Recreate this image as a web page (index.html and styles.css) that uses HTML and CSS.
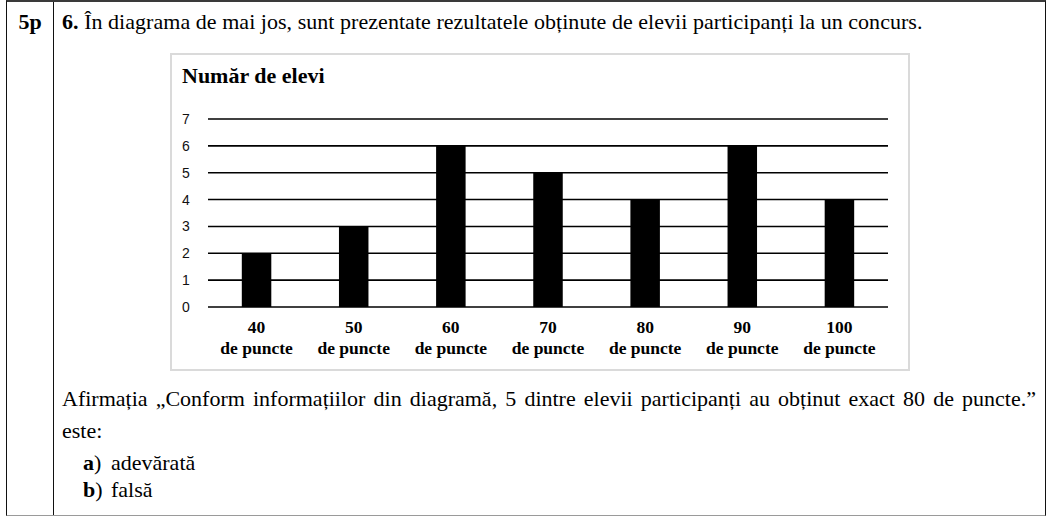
FILE: index.html
```html
<!DOCTYPE html>
<html lang="ro">
<head>
<meta charset="utf-8">
<title>Diagrama</title>
<link rel="stylesheet" href="styles.css">
</head>
<body>
<div class="sheet">
  <div class="score">5p</div>
  <div class="content">
    <p class="q"><b>6.</b> În diagrama de mai jos, sunt prezentate rezultatele obținute de elevii participanți la un concurs.</p>
    <div class="chart">
      <div class="chart-title">Număr de elevi</div>
      <svg class="plot" width="736" height="212" viewBox="0 0 736 212">
        <g font-family="Liberation Sans, Arial, sans-serif" font-size="14" text-anchor="middle" fill="#111">
          <text x="14" y="19">7</text>
          <text x="14" y="45.9">6</text>
          <text x="14" y="72.7">5</text>
          <text x="14" y="99.6">4</text>
          <text x="14" y="126.4">3</text>
          <text x="14" y="153.3">2</text>
          <text x="14" y="180.1">1</text>
          <text x="14" y="207">0</text>
        </g>
        <g stroke="#000" stroke-width="1.6">
          <line x1="36" x2="716" y1="14" y2="14"/>
          <line x1="36" x2="716" y1="40.86" y2="40.86"/>
          <line x1="36" x2="716" y1="67.71" y2="67.71"/>
          <line x1="36" x2="716" y1="94.57" y2="94.57"/>
          <line x1="36" x2="716" y1="121.43" y2="121.43"/>
          <line x1="36" x2="716" y1="148.29" y2="148.29"/>
          <line x1="36" x2="716" y1="175.14" y2="175.14"/>
          <line x1="36" x2="716" y1="202" y2="202"/>
        </g>
        <g fill="#000">
          <rect x="69.8" y="148.29" width="29.5" height="53.71"/>
          <rect x="166.96" y="121.43" width="29.5" height="80.57"/>
          <rect x="264.1" y="40.86" width="29.5" height="161.14"/>
          <rect x="361.25" y="67.71" width="29.5" height="134.29"/>
          <rect x="458.4" y="94.57" width="29.5" height="107.43"/>
          <rect x="555.54" y="40.86" width="29.5" height="161.14"/>
          <rect x="652.68" y="94.57" width="29.5" height="107.43"/>
        </g>
      </svg>
      <div class="xlabels">
        <div class="xl"><span>40</span><span>de puncte</span></div>
        <div class="xl"><span>50</span><span>de puncte</span></div>
        <div class="xl"><span>60</span><span>de puncte</span></div>
        <div class="xl"><span>70</span><span>de puncte</span></div>
        <div class="xl"><span>80</span><span>de puncte</span></div>
        <div class="xl"><span>90</span><span>de puncte</span></div>
        <div class="xl"><span>100</span><span>de puncte</span></div>
      </div>
    </div>
    <p class="stmt"><span class="just">Afirmația „Conform informațiilor din diagramă, 5 dintre elevii participanți au obținut exact 80 de puncte.”</span>este:</p>
    <ul class="opts">
      <li><span class="lbl"><b>a</b>)</span>adevărată</li>
      <li><span class="lbl"><b>b</b>)</span>falsă</li>
    </ul>
  </div>
</div>
</body>
</html>
```

FILE: styles.css
```css
html, body {
  margin: 0;
  padding: 0;
  background: #fff;
}

body {
  font-family: "Liberation Serif", "Times New Roman", serif;
  color: #000;
}

.sheet {
  display: flex;
  margin-left: 6px;
  width: 1040px;
  height: 516px;
  box-sizing: border-box;
  border-top: 2px solid #3a3a3a;
  border-left: 1px solid #111;
  border-right: 1px solid #111;
  border-bottom: 1px solid #9a9a9a;
}

.score {
  width: 46px;
  flex: none;
  border-right: 1px solid #111;
  text-align: center;
  font-weight: bold;
  font-size: 22px;
  line-height: 26px;
  padding-top: 7px;
}

.content {
  flex: 1;
  padding: 7px 9px 0 8px;
}

.q {
  margin: 0;
  font-size: 22px;
  letter-spacing: 0.04px;
  line-height: 26px;
}

.chart {
  margin: 18px 0 0 108px;
  width: 740px;
  height: 318px;
  box-sizing: border-box;
  border: 2px solid #dadada;
}

.chart-title {
  margin: 9px 0 0 10px;
  font-size: 22px;
  font-weight: bold;
  line-height: 24px;
}

.plot {
  display: block;
  margin-top: 17px;
}

.xlabels {
  display: flex;
  width: 680px;
  margin: 0 0 0 36px;
}

.xl {
  flex: 1;
  display: flex;
  flex-direction: column;
  align-items: center;
  font-weight: bold;
  font-size: 17.5px;
  line-height: 21px;
}

.stmt {
  margin: 12px 0 0;
  font-size: 22px;
  line-height: 32px;
}

.just {
  display: block;
  text-align: justify;
  text-align-last: justify;
}

.opts {
  list-style: none;
  margin: 2px 0 0;
  padding: 0 0 0 21px;
  font-size: 22px;
  line-height: 27px;
}

.lbl {
  display: inline-block;
  width: 28px;
}
```
